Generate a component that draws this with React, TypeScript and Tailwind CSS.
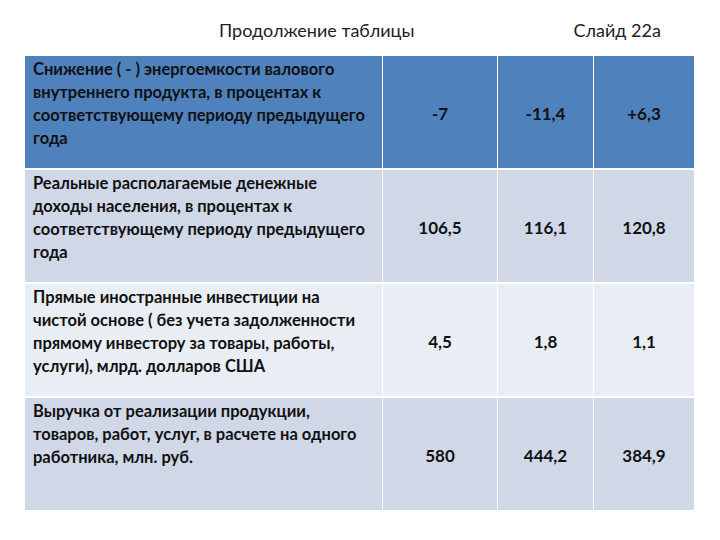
const rows = [
  {
    lines: [
      "Снижение ( - ) энергоемкости валового",
      "внутреннего продукта, в процентах к",
      "соответствующему периоду предыдущего",
      "года",
    ],
    values: ["-7", "-11,4", "+6,3"],
    bg: "bg-[#4f81bd]",
  },
  {
    lines: [
      "Реальные располагаемые денежные",
      "доходы населения, в процентах к",
      "соответствующему периоду предыдущего",
      "года",
    ],
    values: ["106,5", "116,1", "120,8"],
    bg: "bg-[#d0d8e8]",
  },
  {
    lines: [
      "Прямые иностранные инвестиции на",
      "чистой основе ( без учета задолженности",
      "прямому инвестору за товары, работы,",
      "услуги), млрд. долларов США",
    ],
    values: ["4,5", "1,8", "1,1"],
    bg: "bg-[#e9edf4]",
  },
  {
    lines: [
      "Выручка от реализации продукции,",
      "товаров, работ, услуг, в расчете на одного",
      "работника, млн. руб.",
    ],
    values: ["580", "444,2", "384,9"],
    bg: "bg-[#d0d8e8]",
  },
]

export default function App() {
  return (
    <div className="w-[720px] h-[540px] bg-white text-black font-['Lato','Liberation_Sans',sans-serif] overflow-hidden">
      <div className="h-[56px] flex items-center pt-[4px] text-[18px] text-[#222]">
        <span className="ml-[219px]">Продолжение таблицы</span>
        <span className="ml-[159px]">Слайд 22а</span>
      </div>
      <div className="ml-[25px] w-[669px] grid grid-cols-[357px_114px_95px_100px] gap-x-px gap-y-[2px] bg-white">
        {rows.map((row, i) => (
          <div key={i} className="contents">
            <div className={`${row.bg} h-[112px] pl-[8px] pt-[2px] text-[16.5px] leading-[23px] font-bold text-[#111]`}>
              {row.lines.map((line, j) => (
                <div key={j} className="whitespace-nowrap">{line}</div>
              ))}
            </div>
            {row.values.map((v, j) => (
              <div key={j} className={`${row.bg} h-[112px] flex items-center justify-center text-[17px] font-bold text-[#111] pt-[3px]`}>
                {v}
              </div>
            ))}
          </div>
        ))}
      </div>
    </div>
  )
}
